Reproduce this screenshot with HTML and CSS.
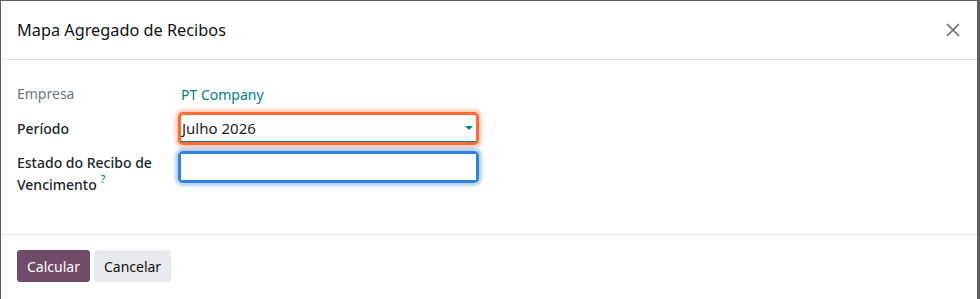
FILE: index.html
```html
<!DOCTYPE html>
<html lang="pt">
<head>
    <meta charset="UTF-8">
    <meta name="viewport" content="width=device-width, initial-scale=1.0">
    <title>Mapa Agregado de Recibos</title>
    <link rel="stylesheet" href="styles.css">
</head>
<body>
    <div class="modal">
        <div class="modal-header">
            <h4 class="modal-title">Mapa Agregado de Recibos</h4>
            <button class="btn-close" aria-label="Fechar">
                <svg width="14" height="14" viewBox="0 0 14 14">
                    <path d="M1 1 L13 13 M13 1 L1 13" stroke="#6b6b6b" stroke-width="1.6" fill="none"/>
                </svg>
            </button>
        </div>
        <div class="modal-body">
            <div class="field-row">
                <div class="field-label muted">Empresa</div>
                <div class="field-value company">PT Company</div>
            </div>
            <div class="field-row">
                <div class="field-label">Período</div>
                <div class="field-value">
                    <div class="focus-box orange">
                        <div class="select">
                            <span>Julho 2026</span>
                            <span class="caret"></span>
                        </div>
                    </div>
                </div>
            </div>
            <div class="field-row tall">
                <div class="field-label">Estado do Recibo de Vencimento<span class="help">?</span></div>
                <div class="field-value">
                    <div class="focus-box blue">
                        <input type="text" class="text-input">
                    </div>
                </div>
            </div>
        </div>
        <div class="modal-footer">
            <button class="btn btn-primary">Calcular</button>
            <button class="btn btn-secondary">Cancelar</button>
        </div>
    </div>
</body>
</html>
```

FILE: styles.css
```css
body {
    margin: 0;
    background: #5f5f5f;
    font-family: "Noto Sans", "Open Sans", sans-serif;
    font-size: 14px;
    color: #212529;
    height: 299px;
    overflow: hidden;
}

.modal {
    margin: 1px 3px 0 1px;
    background: #fff;
    height: 298px;
    overflow: hidden;
}

.modal-header {
    display: flex;
    align-items: center;
    justify-content: space-between;
    height: 58px;
    padding: 0 16px;
    border-bottom: 1px solid #dee2e6;
}

.modal-title {
    margin: 0;
    font-size: 16.3px;
    font-weight: 400;
    color: #111;
}

.btn-close {
    border: none;
    background: none;
    padding: 0;
    width: 16px;
    height: 16px;
    display: flex;
    align-items: center;
    justify-content: center;
}

.modal-body {
    padding: 23px 16px 30px;
    height: 121px;
    border-bottom: 1px solid #dee2e6;
}

.field-row {
    display: flex;
    align-items: center;
    margin-bottom: 7px;
}

.field-row.tall {
    align-items: flex-start;
}

.field-label {
    width: 164px;
    line-height: 22px;
    font-weight: 500;
}

.field-label.muted {
    color: #6c757d;
    font-weight: 400;
}

.help {
    display: inline-block;
    color: #017e84;
    font-size: 10px;
    line-height: 10px;
    vertical-align: top;
    margin-left: 4px;
}

.field-value {
    width: 298px;
}

.company {
    color: #017e84;
    line-height: 21px;
}

.focus-box {
    border: 3px solid;
    border-radius: 5px;
    margin-left: -3px;
}

.focus-box.orange {
    border-color: #ff6a36;
    box-shadow: 0 0 3px 3px rgba(255, 120, 70, 0.35);
}

.focus-box.blue {
    border-color: #2f80e0;
    box-shadow: 0 0 3px 3px rgba(47, 128, 224, 0.35);
    margin-top: -1px;
}

.select {
    display: flex;
    align-items: center;
    justify-content: space-between;
    height: 26px;
    padding-left: 1px;
    border-bottom: 1px solid #017e84;
    font-size: 15px;
}

.caret {
    width: 0;
    height: 0;
    border-left: 4px solid transparent;
    border-right: 4px solid transparent;
    border-top: 4px solid #017e84;
    margin-right: 3px;
}

.text-input {
    display: block;
    width: 100%;
    height: 26px;
    box-sizing: border-box;
    border: none;
    outline: none;
    font: inherit;
}

.modal-footer {
    display: flex;
    gap: 4px;
    padding: 15px 16px;
}

.btn {
    font-family: inherit;
    font-size: 14px;
    border: none;
    border-radius: 3px;
    height: 32px;
    padding: 0 10px;
}

.btn-primary {
    background: #714b67;
    color: #fff;
}

.btn-secondary {
    background: #e7e9ed;
    color: #111;
}
```
